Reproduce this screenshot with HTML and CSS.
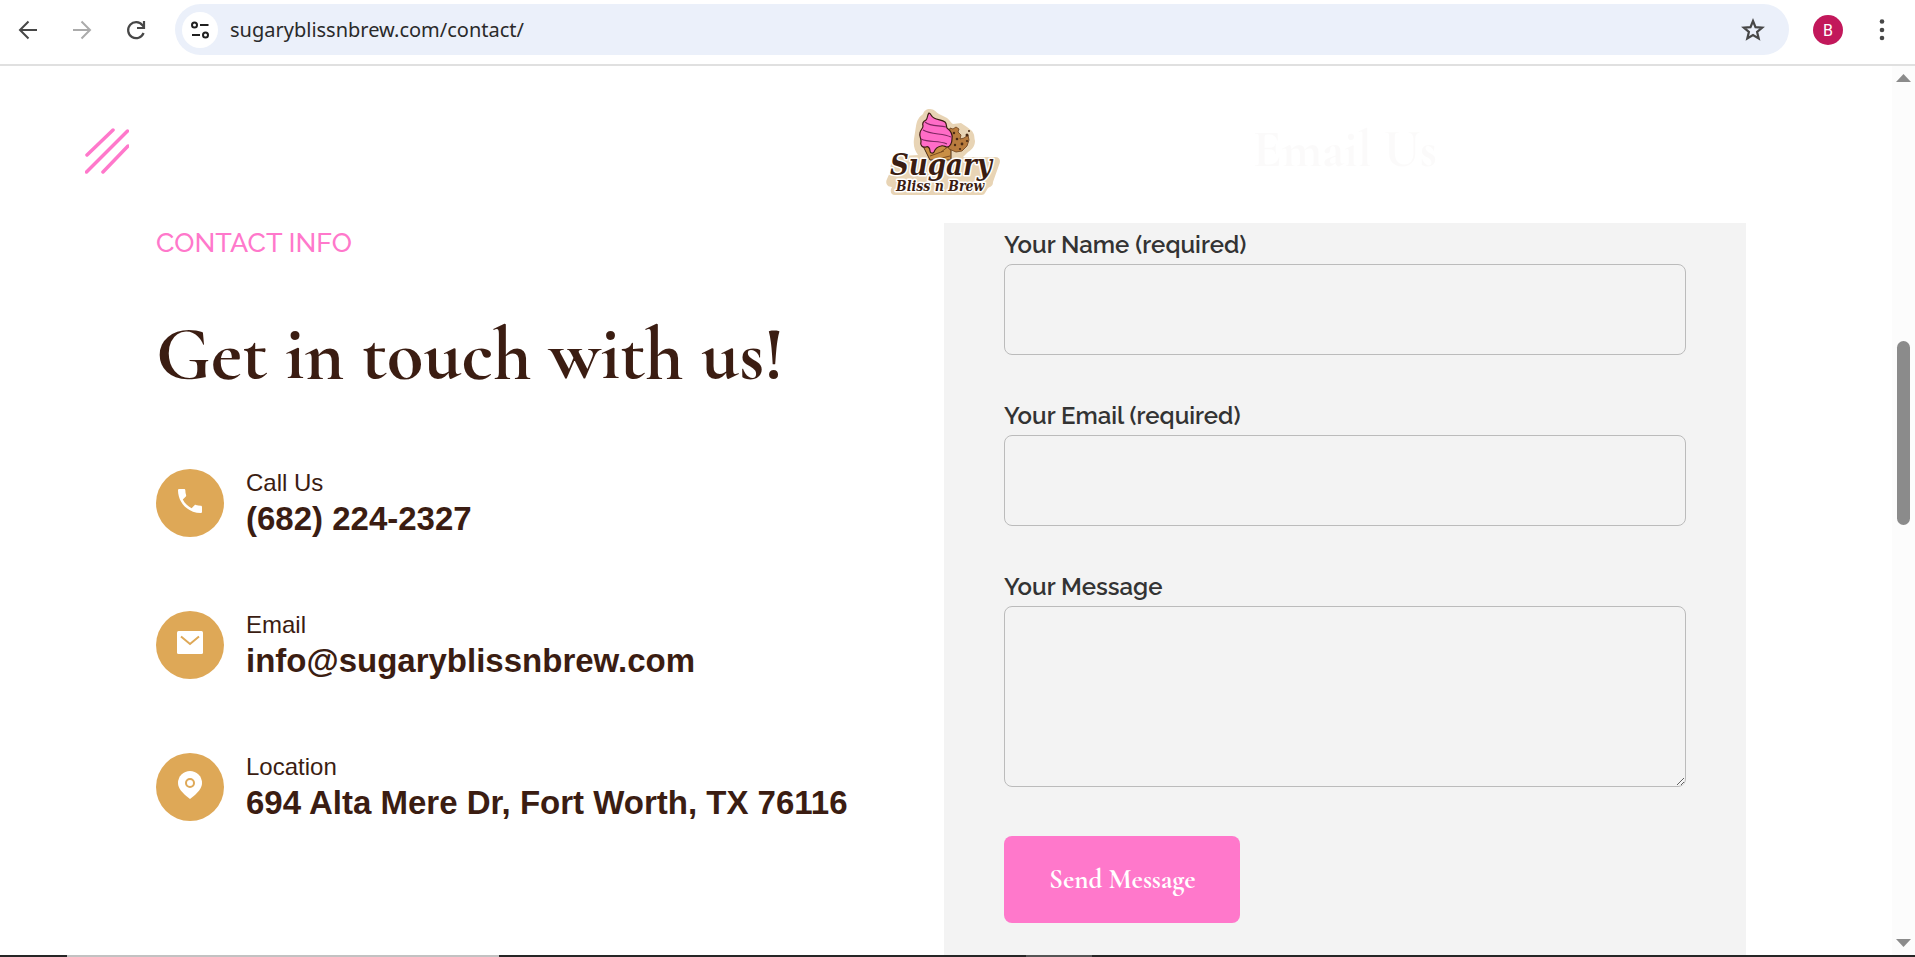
FILE: index.html
```html
<!DOCTYPE html>
<html lang="en">
<head>
    <meta charset="UTF-8">
    <meta name="viewport" content="width=device-width, initial-scale=1.0">
    <title>Contact - Sugary Bliss n Brew</title>
    <link rel="stylesheet" href="styles.css">
</head>
<body>
    <!-- Browser toolbar -->
    <div class="toolbar">
        <div class="nav-buttons">
            <button type="button" class="tool-btn" aria-label="Back">
                <svg width="28" height="28" viewBox="0 0 28 28" fill="none" stroke="#474747" stroke-width="2"><path d="M23 14H6M14.500 5.500L6 14l8.500 8.500"/></svg>
            </button>
            <button type="button" class="tool-btn" aria-label="Forward">
                <svg width="28" height="28" viewBox="0 0 28 28" fill="none" stroke="#ababab" stroke-width="2"><path d="M5 14h17M13.500 5.500L22 14l-8.500 8.500"/></svg>
            </button>
            <button type="button" class="tool-btn" aria-label="Reload">
                <svg width="28" height="28" viewBox="0 0 28 28" fill="none" stroke="#474747" stroke-width="2.200"><path d="M21.600 17A8 8 0 1 1 20.500 9.300L22 11"/><path d="M22 5v7h-7"/></svg>
            </button>
        </div>
        <div class="omnibox">
            <button type="button" class="site-info" aria-label="View site information">
                <svg width="20" height="20" viewBox="0 0 20 20" fill="none" stroke="#1f1f1f" stroke-width="2"><circle cx="4.500" cy="5" r="2.500"/><path d="M10 5h8.500M2 15h8"/><circle cx="15.500" cy="15" r="2.500"/></svg>
            </button>
            <input class="url" type="text" value="sugaryblissnbrew.com/contact/" aria-label="Address">
            <button type="button" class="tool-btn" aria-label="Bookmark this page">
                <svg width="28" height="28" viewBox="0 0 28 28" fill="none" stroke="#474747" stroke-width="2.200"><path d="M14 5l2.500 6.200 6.700.5-5.100 4.300 1.600 6.500L14 19l-5.700 3.500 1.600-6.500-5.100-4.300 6.700-.5z"/></svg>
            </button>
        </div>
        <button type="button" class="avatar" aria-label="Profile">B</button>
        <button type="button" class="menu-btn" aria-label="Menu">
            <svg width="20" height="28" viewBox="0 0 20 28" fill="#474747"><circle cx="10" cy="5.500" r="2.300"/><circle cx="10" cy="14" r="2.300"/><circle cx="10" cy="22" r="2.300"/></svg>
        </button>
    </div>

    <div class="viewport">
        <div class="page">
            <header class="site-header">
                <button type="button" class="nav-toggle" aria-label="Open menu">
                    <svg width="44" height="48" viewBox="0 0 44 48" stroke="#ff78cb" stroke-width="3.500" stroke-linecap="round"><path d="M2 27L28 2M1.500 44L42.500 3M18 44L43 18"/></svg>
                </button>
                <a class="logo" href="#" aria-label="Sugary Bliss n Brew">
                    <svg width="114" height="88" viewBox="0 0 114 88">
                        <!-- sticker backing -->
                        <path d="M44 1c4 0 6 3 9 5l8 4c3 2 4 5 6 6l8-1 6 4 5 4c3 4 2 6 3 10 0 6-4 9-8 12l-4 4h32c5 0 6 4 4 8l-6 17c0 5-4 5-5 6l-3 5c-1 2-3 2-5 2H9c-5 0-5-5-3-8-5 0-7-4-5-8l4-9c-2-6 3-14 10-14l17-1c-3-4-5-9-4-16l2-13c1-6 3-9 7-12 1-3 3-5 7-5z" fill="#e8d4b5"/>
                        <!-- cone -->
                        <path d="M37 38l28-4v18H44z" fill="#c98f45" stroke="#4a2a14"/>
                        <path d="M44 48l14-5M52 51l12-3M63 38l-8 6" fill="none" stroke="#7a4a1e"/>
                        <!-- cookie -->
                        <path d="M64 20l3 1 3-2 3 2-1 3 3 3-1 4 4-1 4-3 1 5-2 6-5 5-6 1-7-3-2-6z" fill="#b97c3e" stroke="#6b3f1c" stroke-width=".8"/>
                        <g fill="#4a2a14"><circle cx="68" cy="25" r="1.200"/><circle cx="71" cy="31" r="1.300"/><circle cx="69" cy="37" r="1.200"/><circle cx="76" cy="36" r="1.400"/><circle cx="81" cy="33" r="1.100"/><circle cx="74" cy="41" r="1.100"/><circle cx="81" cy="27" r="1.500"/><circle cx="83" cy="23" r="1"/></g>
                        <!-- ice cream -->
                        <path d="M43 5c2 0 2 4 5 5 4 2 8 2 11 4 2 2 1 4 2 6 4 3 6 6 5 11 0 4-2 8-5 8-2 0-3-2-6-1-4 1-6 3-7 6-1 2-4 1-4-1 0-3-2-5-4-4-4 1-6-2-5-6 0-3-2-5-1-8 0-3 3-4 3-7-1-3 1-5 3-6 2-2 1-5 3-7z" fill="#ff6cc7" stroke="#3b1d12" stroke-width="1.200"/>
                        <path d="M39 14c6 5 14 3 21 5M37 22c9 5 19 3 28 7M35 31c9 4 17 1 26 5" fill="none" stroke="#7d2760" stroke-width="1.100"/>
                        <g class="logo-text">
                            <text class="logo-big" x="4" y="67">Sugary</text>
                            <text class="logo-small" x="10" y="83">Bliss n Brew</text>
                        </g>
                    </svg>
                </a>
            </header>

            <main class="contact">
                <section class="contact-info">
                    <p class="eyebrow">CONTACT INFO</p>
                    <h1>Get in touch with us!</h1>
                    <ul class="info-list">
                        <li class="info-item">
                            <span class="info-icon">
                                <svg width="32" height="32" viewBox="0 0 24 24" fill="#fff"><path d="M6.600 10.800c1.400 2.800 3.800 5.100 6.600 6.600l2.200-2.200c.3-.3.700-.4 1-.2 1.100.4 2.300.6 3.600.6.600 0 1 .4 1 1V20c0 .6-.4 1-1 1C10.600 21 3 13.400 3 4c0-.6.400-1 1-1h3.500c.6 0 1 .4 1 1 0 1.300.2 2.500.6 3.600.1.300 0 .7-.2 1z"/></svg>
                            </span>
                            <div class="info-text">
                                <span class="info-label">Call Us</span>
                                <a href="tel:+16822242327">(682) 224-2327</a>
                            </div>
                        </li>
                        <li class="info-item">
                            <span class="info-icon">
                                <svg width="26" height="26" viewBox="0 0 26 26"><rect y="1" width="26" height="23" rx="1.500" fill="#fff"/><path d="M4 6.500l9 7.500 9-7.500" fill="none" stroke="#dea857" stroke-width="2"/></svg>
                            </span>
                            <div class="info-text">
                                <span class="info-label">Email</span>
                                <a href="mailto:info@sugaryblissnbrew.com">info@sugaryblissnbrew.com</a>
                            </div>
                        </li>
                        <li class="info-item">
                            <span class="info-icon">
                                <svg width="24" height="28" viewBox="0 0 24 28"><path d="M12 0a12 12 0 0 1 12 12c0 5-4 10-12 16C4 22 0 17 0 12A12 12 0 0 1 12 0z" fill="#fff"/><circle cx="12" cy="12" r="4" fill="none" stroke="#dea857" stroke-width="2"/></svg>
                            </span>
                            <div class="info-text">
                                <span class="info-label">Location</span>
                                <a href="#map">694 Alta Mere Dr, Fort Worth, TX 76116</a>
                            </div>
                        </li>
                    </ul>
                </section>

                <section class="form-card">
                    <h2>Email Us</h2>
                    <form class="contact-form">
                        <div class="field">
                            <label for="name">Your Name (required)</label>
                            <input type="text" id="name" name="name" required>
                        </div>
                        <div class="field">
                            <label for="email">Your Email (required)</label>
                            <input type="email" id="email" name="email" required>
                        </div>
                        <div class="field">
                            <label for="message">Your Message</label>
                            <textarea id="message" name="message"></textarea>
                        </div>
                        <button type="submit" class="send-btn">Send Message</button>
                    </form>
                </section>
            </main>
        </div>

        <div class="scrollbar">
            <svg width="15" height="8" viewBox="0 0 15 8" fill="#8b8b8b"><path d="M7.500 0L15 8H0z"/></svg>
            <div class="track"><div class="thumb"></div></div>
            <svg width="15" height="8" viewBox="0 0 15 8" fill="#8b8b8b"><path d="M0 0h15L7.500 8z"/></svg>
        </div>
    </div>
    <div class="taskbar"></div>
</body>
</html>
```
FILE: styles.css
```css
* {
    margin: 0;
    padding: 0;
    box-sizing: border-box;
}

body {
    display: flex;
    flex-direction: column;
    height: 100vh;
    overflow: hidden;
    font-family: 'Liberation Sans', Arial, sans-serif;
    background-color: #fff;
    color: #3b1d12;
}

button {
    border: none;
    background: none;
    cursor: pointer;
}

a {
    color: inherit;
    text-decoration: none;
}

svg {
    display: block;
}

/* Browser toolbar */
.toolbar {
    display: flex;
    align-items: flex-start;
    padding: 4px 23px 9px 14px;
    border-bottom: 2px solid #e0e0e0;
}

.nav-buttons {
    display: flex;
    align-items: center;
    gap: 26px;
    height: 51px;
    margin-right: 25px;
}

.omnibox {
    display: flex;
    flex: 1;
    align-items: center;
    height: 51px;
    padding: 0 22px 0 7px;
    border-radius: 26px;
    background-color: #ebf0fa;
}

.site-info {
    display: flex;
    align-items: center;
    justify-content: center;
    width: 36px;
    height: 36px;
    border-radius: 50%;
    background-color: #fff;
}

.url {
    flex: 1;
    margin-left: 12px;
    border: none;
    outline: none;
    background: none;
    font-family: 'Noto Sans', 'Open Sans', sans-serif;
    font-size: 20px;
    color: #2a2a2a;
}

.avatar {
    width: 30px;
    height: 30px;
    margin: 11px 29px 0 24px;
    border-radius: 50%;
    background-color: #c2185b;
    color: #fff;
    font-family: Roboto, sans-serif;
    font-size: 16px;
}

.menu-btn {
    display: flex;
    align-items: center;
    height: 51px;
}

/* Page area and scrollbar */
.viewport {
    display: flex;
    flex: 1;
    min-height: 0;
}

.page {
    position: relative;
    flex: 1;
    overflow: hidden;
}

.scrollbar {
    display: flex;
    flex-direction: column;
    align-items: center;
    width: 23px;
    padding: 8px 0;
    background-color: #fcfcfc;
}

.track {
    flex: 1;
    padding-top: 259px;
}

.thumb {
    width: 13px;
    height: 184px;
    border-radius: 7px;
    background-color: #8b8b8b;
}

.taskbar {
    height: 2px;
    background: linear-gradient(to right, #262626 67px, #c2c2c2 67px, #c2c2c2 499px, #262626 499px, #262626 1026px, #555 1026px, #555 1092px, #262626 1092px);
}

.site-header {
    position: absolute;
    top: 0;
    left: 0;
    z-index: 2;
    display: grid;
    grid-template-columns: 1fr auto 1fr;
    align-items: center;
    justify-items: start;
    width: 100%;
    height: 157px;
    padding: 14px 92px 0 85px;
    background-color: rgba(255, 255, 255, 0.98);
}

.logo text {
    font-family: 'DejaVu Serif Condensed', 'DejaVu Serif', serif;
    font-weight: bold;
    font-style: italic;
}

.logo-big {
    font-size: 29px;
}

.logo-small {
    font-size: 14px;
}

.logo-text {
    fill: #3b1d12;
    stroke: #fff;
    stroke-width: 3px;
    stroke-linejoin: round;
    paint-order: stroke;
}

/* Contact section */
.contact {
    display: flex;
    max-width: 1600px;
    min-height: 100%;
    margin: 0 auto;
}

.contact-info {
    flex: 1;
    padding: 161px 10px 0;
}

.eyebrow {
    font-family: Raleway, Lato, sans-serif;
    font-size: 27px;
    font-weight: 500;
    line-height: 32px;
    color: #ff78cb;
}

h1,
h2,
.send-btn {
    font-family: 'Cormorant Garamond', 'Liberation Serif', serif;
    font-weight: bold;
}

h1 {
    margin-top: 56px;
    font-size: 75px;
    line-height: 80px;
}

.info-list {
    display: flex;
    flex-direction: column;
    gap: 70px;
    margin-top: 74px;
    list-style: none;
}

.info-item {
    display: flex;
    align-items: flex-start;
    gap: 22px;
}

.info-icon {
    display: flex;
    align-items: center;
    justify-content: center;
    width: 68px;
    height: 68px;
    padding-bottom: 4px;
    border-radius: 50%;
    background-color: #dea857;
}

.info-text {
    display: flex;
    flex-direction: column;
}

.info-label {
    font-size: 24px;
    line-height: 28px;
}

.info-text a {
    font-size: 33px;
    font-weight: bold;
    line-height: 44px;
}

.form-card {
    flex: 0 1 802px;
    padding: 54px 60px 32px;
    background-color: #f3f3f3;
}

h2 {
    margin-bottom: 50px;
    font-size: 52px;
    line-height: 60px;
    text-align: center;
}

.contact-form {
    display: flex;
    flex-direction: column;
    align-items: flex-start;
    gap: 46px;
}

.field {
    display: flex;
    flex-direction: column;
    gap: 4px;
    width: 100%;
}

.field label {
    font-family: Raleway, Lato, sans-serif;
    font-size: 24px;
    font-weight: 600;
    line-height: 30px;
    color: #333;
}

.field input,
.field textarea {
    width: 100%;
    height: 91px;
    padding: 0 24px;
    border: 1px solid #bbb;
    border-radius: 8px;
    outline: none;
    background: none;
    font-size: 24px;
}

.field textarea {
    height: 181px;
    padding: 24px;
    resize: vertical;
}

.send-btn {
    height: 87px;
    margin-top: 3px;
    padding: 0 45px;
    border-radius: 8px;
    background-color: #ff78cb;
    color: #fff;
    font-size: 27px;
}
```
